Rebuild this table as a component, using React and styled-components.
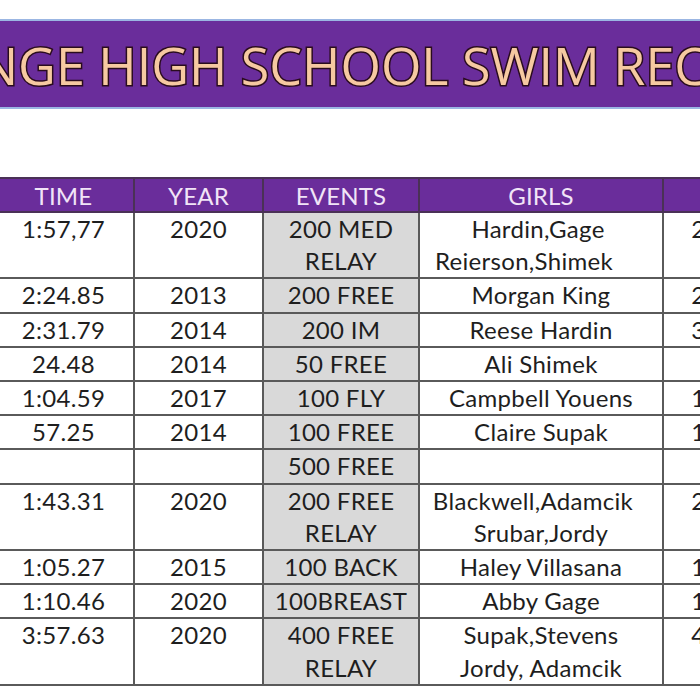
import React from "react";
import styled, { createGlobalStyle } from "styled-components";

// records shown on the sheet (shift = line pushed left by trailing spaces in the sheet)
const records = [
    { time: "1:57,77", year: "2020", event: ["200 MED", "RELAY"], girls: [{ text: "Hardin,Gage", shift: 6 }, { text: "Reierson,Shimek", shift: 34 }], boys: "2:05.41" },
    { time: "2:24.85", year: "2013", event: ["200 FREE"], girls: [{ text: "Morgan King" }], boys: "2:03.18" },
    { time: "2:31.79", year: "2014", event: ["200 IM"], girls: [{ text: "Reese Hardin" }], boys: "3:02.66" },
    { time: "24.48", year: "2014", event: ["50 FREE"], girls: [{ text: "Ali Shimek" }], boys: "23.91" },
    { time: "1:04.59", year: "2017", event: ["100 FLY"], girls: [{ text: "Campbell Youens" }], boys: "1:01.27" },
    { time: "57.25", year: "2014", event: ["100 FREE"], girls: [{ text: "Claire Supak" }], boys: "1:00.12" },
    { time: "", year: "", event: ["500 FREE"], girls: [{ text: "\u00a0" }], boys: "" },
    { time: "1:43.31", year: "2020", event: ["200 FREE", "RELAY"], girls: [{ text: "Blackwell,Adamcik", shift: 16 }, { text: "Srubar,Jordy" }], boys: "2:00.84" },
    { time: "1:05.27", year: "2015", event: ["100 BACK"], girls: [{ text: "Haley Villasana" }], boys: "1:08.33" },
    { time: "1:10.46", year: "2020", event: ["100BREAST"], girls: [{ text: "Abby Gage" }], boys: "1:12.05" },
    { time: "3:57.63", year: "2020", event: ["400 FREE", "RELAY"], girls: [{ text: "Supak,Stevens" }, { text: "Jordy, Adamcik" }], boys: "4:10.72" },
];

const columns = [
    { label: "TIME", width: 141 },
    { label: "YEAR", width: 129 },
    { label: "EVENTS", width: 156 },
    { label: "GIRLS", width: 244 },
    { label: "", width: 140 },
];

function App() {
    return (
        <>
            <GlobalStyle />
            <Page>
                <Banner>
                    <Title>GRANGE HIGH SCHOOL SWIM RECORDS</Title>
                </Banner>
                <Sheet>
                    <Table>
                        <colgroup>
                            {columns.map((col, idx) => (
                                <col key={`col-${idx}`} style={{ width: col.width }} />
                            ))}
                        </colgroup>
                        <thead>
                            <tr>
                                {columns.map((col, idx) => (
                                    <Head key={`head-${idx}`}>{col.label}</Head>
                                ))}
                            </tr>
                        </thead>
                        <tbody>
                            {records.map((rec, idx) => (
                                <tr key={`rec-${idx}`}>
                                    <Cell>{rec.time}</Cell>
                                    <Cell>{rec.year}</Cell>
                                    <Cell $shaded>
                                        {rec.event.map((line, i) => (
                                            <Line key={i}>{line}</Line>
                                        ))}
                                    </Cell>
                                    <Cell>
                                        {rec.girls.map((line, i) => (
                                            <Line key={i} $shift={line.shift || 0}>
                                                {line.text}
                                            </Line>
                                        ))}
                                    </Cell>
                                    <Cell>{rec.boys}</Cell>
                                </tr>
                            ))}
                        </tbody>
                    </Table>
                </Sheet>
            </Page>
        </>
    );
}

const GlobalStyle = createGlobalStyle`
    body {
        margin: 0;
        background: #ffffff;
        font-family: Lato, "Open Sans", sans-serif;
        overflow: hidden;
    }
`;

const Page = styled.div`
    width: 700px;
    height: 700px;
    overflow: hidden;
    padding-top: 19px;
    box-sizing: border-box;
`;

const Banner = styled.div`
    height: 86px;
    background: #6a2d9b;
    border-top: 2px solid #9bb6e3;
    border-bottom: 2px solid #9bb6e3;
    display: flex;
    justify-content: center;
    align-items: center;
    overflow: hidden;
`;

const Title = styled.div`
    flex-shrink: 0;
    white-space: nowrap;
    font-family: "Open Sans", Lato, sans-serif;
    font-size: 52px;
    font-weight: 400;
    color: #f6c9a1;
    -webkit-text-stroke: 3px #2a0c1e;
    paint-order: stroke fill;
    margin-left: 22px;
`;

const Sheet = styled.div`
    margin-top: 68px;
    margin-left: -8px;
`;

const Table = styled.table`
    border-collapse: collapse;
    table-layout: fixed;
    width: 810px;
`;

const Head = styled.th`
    height: 32px;
    padding: 0;
    background: #6a2d9b;
    color: #f1e4f7;
    font-weight: 400;
    font-size: 24px;
    letter-spacing: 0.2px;
    text-align: center;
    border: 2px solid #4a3156;
`;

const Cell = styled.td`
    padding: 0;
    vertical-align: top;
    text-align: center;
    font-size: 24px;
    letter-spacing: 0.3px;
    line-height: 32.2px;
    color: #1e1e1e;
    background: ${(props) => (props.$shaded ? "#d9d9d9" : "#ffffff")};
    border: 2px solid #5a5a5a;
    white-space: nowrap;
`;

const Line = styled.div`
    line-height: 32.2px;
    padding-right: ${(props) => props.$shift || 0}px;
`;

export default App;
